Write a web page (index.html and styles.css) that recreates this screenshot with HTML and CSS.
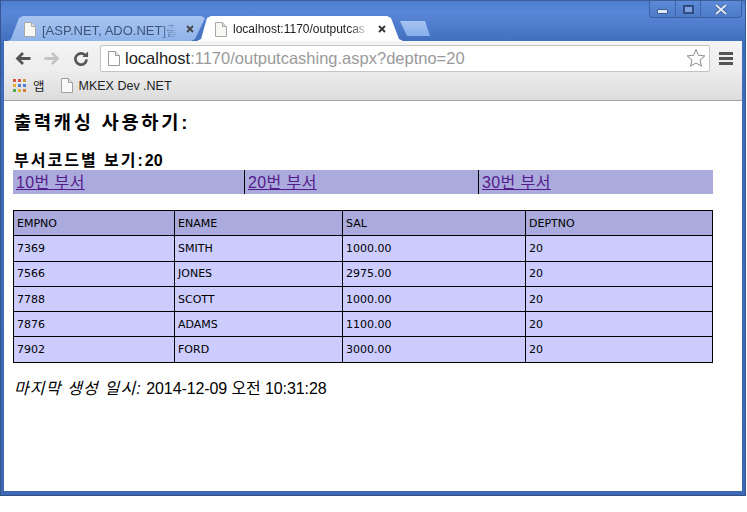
FILE: index.html
```html
<!DOCTYPE html>
<html lang="ko">
<head>
<meta charset="utf-8">
<title>출력캐싱</title>
<link rel="stylesheet" href="styles.css">
</head>
<body>
<div class="window">
  <div class="tabstrip">
    <div class="tab tab-back">
      <svg class="pageicon" viewBox="0 0 12 15"><path d="M.5.5h7l4 4v10H.5z" fill="#f6f6f2" stroke="#a8a8a8"/><path d="M7.5.5v4h4" fill="#ddd" stroke="#a8a8a8"/></svg>
      <span class="tab-title fade">[ASP.NET, ADO.NET]출</span>
      <svg class="tab-x" viewBox="0 0 8 8"><path d="M1 1l6 6M7 1L1 7" stroke="#444" stroke-width="1.8"/></svg>
    </div>
    <div class="tab tab-front">
      <svg class="pageicon" viewBox="0 0 12 15"><path d="M.5.5h7l4 4v10H.5z" fill="#f8f8f4" stroke="#a8a8a8"/><path d="M7.5.5v4h4" fill="#ddd" stroke="#a8a8a8"/></svg>
      <span class="tab-title fade dark">localhost:1170/outputcas</span>
      <svg class="tab-x" viewBox="0 0 8 8"><path d="M1 1l6 6M7 1L1 7" stroke="#333" stroke-width="1.8"/></svg>
    </div>
    <div class="newtab"></div>
    <div class="controls">
      <div class="ctl ctl-min"><span class="min-glyph"></span></div>
      <div class="ctl ctl-max"><span class="max-glyph"></span></div>
      <div class="ctl ctl-close">
        <svg viewBox="0 0 14 11" class="close-glyph"><path d="M2 1l10 9M12 1L2 10" stroke="#3f5f95" stroke-width="3.400"/><path d="M2 1l10 9M12 1L2 10" stroke="#e4ecf8" stroke-width="1.800"/></svg>
      </div>
    </div>
  </div>
  <div class="toolbar">
    <div class="navrow">
      <svg class="nav" viewBox="0 0 16 14"><path d="M15.500 7H4M8 1.500L2.500 7 8 12.500" fill="none" stroke="#555" stroke-width="2.800"/></svg>
      <svg class="nav" viewBox="0 0 16 14"><path d="M.5 7H12M8 1.500L13.500 7 8 12.500" fill="none" stroke="#c4c4c4" stroke-width="2.800"/></svg>
      <svg class="nav" viewBox="0 0 16 16"><path d="M13 5.200A6 6 0 1 0 14 9" fill="none" stroke="#555" stroke-width="2.800"/><path d="M9.500 6.500H15.500V.5z" fill="#555"/></svg>
      <div class="omnibox">
        <svg class="pageicon omni-page" viewBox="0 0 12 15"><path d="M.5.5h7l4 4v10H.5z" fill="#fff" stroke="#9a9a9a"/><path d="M7.5.5v4h4" fill="#eee" stroke="#9a9a9a"/></svg>
        <span class="url"><span class="host">localhost</span>:1170/outputcashing.aspx?deptno=20</span>
        <svg class="star" viewBox="0 0 20 20"><path d="M10 1.500l2.500 5.800 6.300.6-4.800 4.100 1.500 6.200L10 14.900l-5.500 3.300L6 12 1.200 7.900l6.300-.6z" fill="#fff" stroke="#8a8a8a"/></svg>
      </div>
      <div class="menu"><span></span><span></span><span></span></div>
    </div>
    <div class="bookmarks">
      <svg class="apps" viewBox="0 0 15 15">
        <rect x="1" y="1" width="3" height="3" fill="#d9534a"/><rect x="6" y="1" width="3" height="3" fill="#d9534a"/><rect x="11" y="1" width="3" height="3" fill="#c9a040"/>
        <rect x="1" y="6" width="3" height="3" fill="#e8b030"/><rect x="6" y="6" width="3" height="3" fill="#4a80d8"/><rect x="11" y="6" width="3" height="3" fill="#4a80d8"/>
        <rect x="1" y="11" width="3" height="3" fill="#58a858"/><rect x="6" y="11" width="3" height="3" fill="#e8b030"/><rect x="11" y="11" width="3" height="3" fill="#d97a3a"/>
      </svg>
      <span class="bm-label">앱</span>
      <svg class="pageicon bm-page" viewBox="0 0 12 15"><path d="M.5.5h7l4 4v10H.5z" fill="#fafafa" stroke="#a0a0a0"/><path d="M7.5.5v4h4" fill="#e4e4e4" stroke="#a0a0a0"/></svg>
      <span class="bm-label">MKEX Dev .NET</span>
    </div>
  </div>
  <main class="content">
    <h3 class="title">출력캐싱 사용하기:</h3>
    <div class="subtitle"><span class="sub-label">부서코드별 보기:</span>20</div>
    <nav class="links">
      <div class="link-cell cell-a"><a href="#">10번 부서</a></div>
      <div class="link-cell cell-b"><a href="#">20번 부서</a></div>
      <div class="link-cell cell-c"><a href="#">30번 부서</a></div>
    </nav>
    <table class="grid">
      <thead>
        <tr><th>EMPNO</th><th>ENAME</th><th>SAL</th><th>DEPTNO</th></tr>
      </thead>
      <tbody>
        <tr><td>7369</td><td>SMITH</td><td>1000.00</td><td>20</td></tr>
        <tr><td>7566</td><td>JONES</td><td>2975.00</td><td>20</td></tr>
        <tr><td>7788</td><td>SCOTT</td><td>1000.00</td><td>20</td></tr>
        <tr><td>7876</td><td>ADAMS</td><td>1100.00</td><td>20</td></tr>
        <tr><td>7902</td><td>FORD</td><td>3000.00</td><td>20</td></tr>
      </tbody>
    </table>
    <p class="stamp"><em>마지막 생성 일시:</em> 2014-12-09 오전 10:31:28</p>
  </main>
</div>
</body>
</html>
```
FILE: styles.css
```css
* { box-sizing: border-box; }
html, body { margin: 0; background: #fff; }
body { width: 747px; height: 512px; overflow: hidden; font-family: "Liberation Sans", "Noto Sans CJK KR", sans-serif; }

.window {
  width: 746px; height: 496px;
  display: flex; flex-direction: column;
  padding: 0 3px 4px 3px;
  background: linear-gradient(#4f7ed0 0, #5a86d8 12px, #3e6cbc 44px, #3e68b2 100%);
  border-top: 1px solid #3b5f96;
  border-left: 1px solid #35578f;
  border-right: 1px solid #35578f;
  border-bottom: 1px solid #2f4f88;
}

.tabstrip { height: 40px; display: flex; align-items: flex-end; padding-left: 4px; flex: none; }
.tab { height: 25px; display: flex; align-items: center; flex: none; padding-top: 1px; }
.tab-back {
  width: 197px; padding-left: 16px; padding-right: 11px;
  background: linear-gradient(#a9c5f0, #8fb3ea);
  clip-path: polygon(0 100%, 3px 92%, 11px 8%, 15px 0, 188px 0, 193px 0, 197px 8%, 187px 92%, 183px 100%);
}
.tab-front {
  width: 206px; margin-left: -8px; padding-left: 18px; padding-right: 17px;
  background: #fff;
  clip-path: polygon(0 100%, 4px 92%, 10px 8%, 14px 0, 190px 0, 194px 8%, 202px 92%, 206px 100%);
}
.pageicon { width: 12px; height: 15px; flex: none; }
.tab-title { font-size: 12px; margin-left: 6px; width: 137px; white-space: nowrap; color: #3c5478; flex: none; }
.tab-back .tab-title { font-size: 13px; }
.tab-title.dark { color: #222; }
.fade { -webkit-mask-image: linear-gradient(90deg, #000 85%, transparent); mask-image: linear-gradient(90deg, #000 85%, transparent); }
.tab-x { width: 8px; height: 8px; margin-left: 7px; flex: none; }
.tab-front .tab-x { margin-left: 8px; }

.newtab {
  width: 30px; height: 15px; margin: 0 0 5px -3px; flex: none;
  background: linear-gradient(#a6c4f2, #86aeea);
  clip-path: polygon(0 0, 25px 0, 30px 100%, 7px 100%);
}

.controls {
  align-self: flex-start; margin-left: auto; display: flex; height: 17px; flex: none;
  border: 1px solid #3a5f9c; border-top: 0; border-radius: 0 0 4px 4px;
  background: linear-gradient(#5d8ad8, #4f7cc8);
}
.ctl { display: flex; align-items: center; justify-content: center; border-left: 1px solid #3f66a6; height: 100%; }
.ctl:first-child { border-left: 0; }
.ctl-min { width: 25px; }
.ctl-max { width: 25px; }
.ctl-close { width: 41px; }
.min-glyph { width: 11px; height: 5px; margin-top: 4px; background: #dfe8f6; border: 1px solid #3b5a90; border-radius: 1px; }
.max-glyph { width: 11px; height: 9px; border: 2px solid #2f4d82; background: #7ea2de; }
.close-glyph { width: 14px; height: 11px; }

.toolbar { flex: none; height: 60px; background: linear-gradient(#f4f4f4, #ededed 50%, #dcdcdc); border-bottom: 1px solid #a3a3a3; }
.navrow { height: 30px; display: flex; align-items: center; padding: 4px 0 0 11px; }
.nav { width: 16px; height: 15px; margin-right: 13px; flex: none; }
.omnibox {
  width: 610px; height: 27px; margin-left: -2px; display: flex; align-items: center; padding: 0 3px 0 7px;
  background: #fff; border: 1px solid #c4c4c4; border-radius: 2px; flex: none;
}
.omni-page { margin-right: 5px; }
.url { font-size: 16.5px; color: #9a9a9a; flex: 1; white-space: nowrap; }
.host { color: #222; }
.star { width: 20px; height: 20px; flex: none; }
.menu { margin-left: 9px; display: flex; flex-direction: column; gap: 2px; width: 14px; flex: none; }
.menu span { height: 3px; background: #555; }

.bookmarks { height: 29px; display: flex; align-items: center; padding-left: 8px; }
.apps { width: 15px; height: 15px; flex: none; margin-right: 6px; }
.bm-label { font-size: 12.5px; color: #222; white-space: nowrap; }
.bm-page { margin: 0 6px 0 16px; }

.content { flex: 1; background: #fff; padding: 11px 0 0 9px; color: #000; }
.title { margin: 0; font-size: 18.72px; line-height: 22px; font-weight: 700; padding-left: 1px; letter-spacing: 2.7px; }
.subtitle { margin-top: 17px; font-size: 16px; line-height: 20px; font-weight: 700; padding-left: 1px; }
.sub-label { letter-spacing: 2px; }
.links { display: flex; width: 700px; height: 24px; background: #aaaadd; margin-top: -1px; font-size: 16px; line-height: 25px; }
.link-cell { padding-left: 3px; letter-spacing: .4px; }
.cell-a { width: 231px; }
.cell-b { width: 234px; border-left: 1px solid #000; }
.cell-c { flex: 1; border-left: 1px solid #000; }
.links a { color: #551a8b; }

.grid {
  border-collapse: collapse; width: 700px; margin-top: 16px; table-layout: fixed;
  font-family: "DejaVu Sans", sans-serif; font-size: 11px;
}
.grid th, .grid td { border: 1px solid #000; padding: 0 3px; height: 25.3px; font-weight: 400; text-align: left; background: #ccccff; }
.grid th { background: #aaaadd; }
.grid th:nth-child(1) { width: 161px; }
.grid th:nth-child(2) { width: 168px; }
.grid th:nth-child(3) { width: 183px; }

.stamp { margin: 16px 0 0 1px; font-size: 16px; line-height: 20px; letter-spacing: -.1px; }
.stamp em { font-style: italic; letter-spacing: 1.15px; }
```
